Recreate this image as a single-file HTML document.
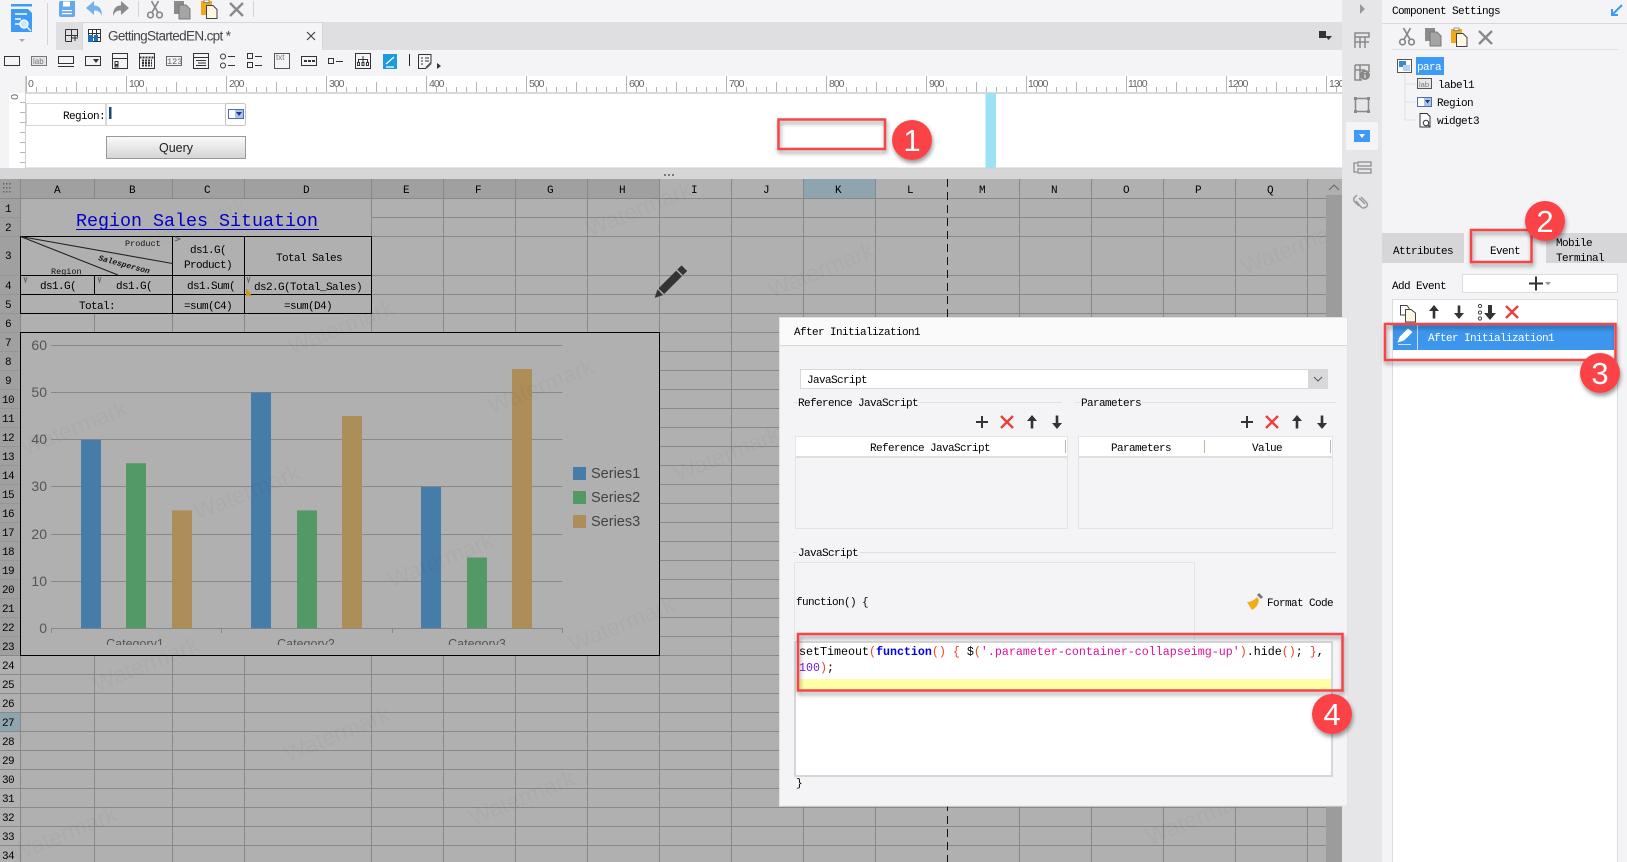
<!DOCTYPE html>
<html><head><meta charset="utf-8"><title>GettingStartedEN.cpt</title>
<style>
html,body{margin:0;padding:0;width:1627px;height:862px;overflow:hidden;background:#f4f4f6}
svg{display:block}
text{white-space:pre}
.s{font-family:"Liberation Mono",monospace;font-size:11px;letter-spacing:-.6px;fill:#000}
.w{font-family:"Liberation Sans",sans-serif;font-size:23px;fill:#000;opacity:.03}
.r{font-family:"Liberation Sans",sans-serif;font-size:10.5px;letter-spacing:-1px;fill:#666}
.c{font-family:"Liberation Sans",sans-serif;font-size:14px;fill:#555}
.n{font-family:"Liberation Sans",sans-serif;font-size:31px;fill:#fff;text-anchor:middle}
.code{font-family:"Liberation Mono",monospace;font-size:11.67px;fill:#000}
</style></head><body>
<svg width="1627" height="862" viewBox="0 0 1627 862" xmlns="http://www.w3.org/2000/svg">
<defs>
<filter id="sh" x="-20%" y="-30%" width="140%" height="170%"><feDropShadow dx="1" dy="3" stdDeviation="2" flood-color="#000" flood-opacity=".4"/></filter>
<pattern id="rt" x="26" y="76" width="100" height="17" patternUnits="userSpaceOnUse">
<path d="M.5 0V17M50.5 6V17M10.5 11V17M20.5 11V17M30.5 11V17M40.5 11V17M60.5 11V17M70.5 11V17M80.5 11V17M90.5 11V17" stroke="#b5b5b5" fill="none"/></pattern>
<pattern id="rl" x="9" y="93" width="17" height="10" patternUnits="userSpaceOnUse"><path d="M11 9.5H17" stroke="#b5b5b5"/></pattern>
<g id="cut" fill="none" stroke="#888" stroke-width="1.7"><circle cx="3.5" cy="14" r="2.8"/><circle cx="12.5" cy="14" r="2.8"/><path d="M5 11.5 11.5 0M11 11.5 4.500 0"/></g>
<g id="copy"><rect x="0" y="0" width="10" height="13" fill="#8b8b8b"/><path d="M5 4h7l4 4v10H5z" fill="#a5a5a5" stroke="#777"/></g>
<g id="paste"><rect x="0" y="1" width="11" height="14" fill="#f0a81c"/><rect x="3" y="0" width="5" height="2.500" fill="#fff" stroke="#555" stroke-width=".6"/><path d="M5.500 5.500h6.500l4 4v9H5.500z" fill="#fff6e4" stroke="#444"/></g>
<path id="del" d="M1 1 14 14M14 1 1 14" stroke="#888" stroke-width="2.300" fill="none"/>
<path id="plus" d="M-6 0H6M0 -6V6" stroke="#333" stroke-width="2"/>
<path id="x" d="M-6 -6 6 6M6 -6 -6 6" stroke="#ea4040" stroke-width="2.400"/>
<path id="up" d="M0 -7 -5 -1H-1.300V6.500H1.300V-1H5Z" fill="#333"/>
<path id="dn" d="M0 7 -5 1H-1.300V-6.500H1.300V1H5Z" fill="#333"/>
<clipPath id="cat"><rect x="21" y="630" width="638" height="15"/></clipPath>
</defs>

<!-- top toolbar background -->
<rect width="1342" height="76" fill="#f4f4f6"/>
<rect x="56" y="22" width="1286" height="28" fill="#dfdfe1"/>
<rect x="82" y="22" width="240" height="28" fill="#f4f4f6"/>
<path d="M82.500 50V22.500H322.500V50" fill="none" stroke="#d6d6d8"/>
<!-- logo -->
<rect x="11" y="4" width="21" height="2.500" fill="#3d9bf5"/>
<path d="M11 9H28L32 13V32H11Z" fill="#3d9bf5"/>
<path d="M15 14H27M15 19H21M15 24H20" stroke="#fff" stroke-width="1.500"/>
<circle cx="24" cy="24" r="4" fill="#cfe4fa" stroke="#fff" stroke-width="1.300"/>
<path d="M27 27 31 31" stroke="#eee" stroke-width="1.500"/>
<path d="M19 39H25L22 42Z" fill="#aaa"/>
<path d="M47.500 3V45M138.500 1V17M253.500 1V17" stroke="#d4d4d6"/>
<!-- save undo redo -->
<path d="M59 3Q59 1 61 1H75V15Q75 17 73 17H61Q59 17 59 15Z" fill="#64a9ec"/>
<rect x="63" y="1.500" width="7" height="5" fill="#fff"/><rect x="62" y="10" width="10" height="1.200" fill="#fff"/><rect x="62" y="13" width="10" height="1.200" fill="#fff"/>
<path d="M86 8 94 1V5.500C100 5.500 102 10 102 16C100 11.500 98 10.500 94 10.500V15Z" fill="#74b2ea"/>
<path d="M129 8 121 1V5.500C115 5.500 113 10 113 16C115 11.500 117 10.500 121 10.500V15Z" fill="#8a8a8a"/>
<use href="#cut" x="147" y="1"/><use href="#copy" x="174" y="1"/><use href="#paste" x="201" y="0"/><use href="#del" x="229" y="2"/>
<!-- tab -->
<path d="M65.500 29.500H78M65.500 35.500H78M65.500 41.500H72M65.500 29.500V41.500M71.500 29.500V41.500M77.500 29.500V37M72 38H78M75 35V41" stroke="#333" fill="none"/>
<rect x="88.500" y="29.500" width="12" height="12" fill="#fff" stroke="#333"/><path d="M88.500 33.500H100.500M92.500 29.500V41.500M96.500 29.500V41.500M88.500 37.500H100.500" stroke="#333"/>
<rect x="88" y="35" width="5" height="7" fill="#1b72b8"/><rect x="94" y="35" width="4" height="6" fill="#1b72b8"/>
<text x="108" y="40.500" font-family="'Liberation Sans',sans-serif" font-size="13.500" fill="#444" textLength="123">GettingStartedEN.cpt *</text>
<path d="M307 32 315 40M315 32 307 40" stroke="#444" stroke-width="1.200"/>
<path d="M1319 31H1326V38H1319Z" fill="#333"/><path d="M1325 36H1332L1328.500 40Z" fill="#333"/>
<!-- widget toolbar -->
<g fill="none" stroke="#333">
<rect x="4.500" y="56.500" width="15" height="9"/>
<rect x="31.500" y="56.500" width="15" height="9" fill="#e6e6e6" stroke="#777"/>
<rect x="58.500" y="56.500" width="15" height="7"/><path d="M58 66.500H74"/>
<rect x="85.500" y="56.500" width="15" height="9"/>
<rect x="112.500" y="53.500" width="15" height="15"/><path d="M112.500 58.500H127.500M115 61.500H118V64.500H115ZM115 65.500H118V67H115Z"/>
<rect x="139.500" y="53.500" width="15" height="15"/><path d="M139.500 57.500H154.500M142 60.500H152M142 63H152M142 65.500H152" stroke-dasharray="2 1" stroke-width="2"/>
<rect x="166.500" y="56.500" width="15" height="9" stroke="#666"/>
<rect x="193.500" y="53.500" width="15" height="15"/><path d="M193.500 57.500H208.500M196 60.500H206M198 63H206M196 65.500H206"/>
<circle cx="223" cy="56.500" r="2.500"/><circle cx="223" cy="65.500" r="2.500"/><path d="M228 56.500H235M228 65.500H235"/>
<rect x="247.500" y="53.500" width="5" height="5"/><rect x="247.500" y="62.500" width="5" height="5"/><path d="M255 56.500H262M255 65.500H262"/>
<rect x="274.500" y="53.500" width="15" height="15" stroke="#555"/>
<rect x="301.500" y="56.500" width="15" height="9"/>
<rect x="328.500" y="58.500" width="5" height="5"/><path d="M336 61.500H343"/>
<rect x="355.500" y="53.500" width="15" height="15"/><path d="M363 56V59.500M358.500 62V59.500H367.500V62M363 59.500V62"/><path d="M357.500 62.500h2v3h-2zM362 62.500h2v3h-2zM366.500 62.500h2v3h-2z"/>
<path d="M409.500 54V66" stroke="#222"/>
<path d="M418.500 54.500H431V63M418.500 54.500V68.500H426"/><path d="M421 58H423M425 58H429M421 61H423M425 61H429M421 64H423"/>
</g>
<path d="M93 59H99L96 63Z M304 60h3v2h-3zM308 60h3v2h-3zM312 60h3v2h-3z" fill="#333"/>
<rect x="383" y="54" width="14" height="15" fill="#1b9ade"/><path d="M386 64 394 57M386 67H394" stroke="#fff" stroke-width="1.200"/>
<path d="M437 63V69L441 66Z" fill="#333"/>
<path d="M426 68 431 63" stroke="#555" stroke-width="2"/>
<text x="33" y="64" font-family="'Liberation Sans',sans-serif" font-size="8" fill="#777">lab</text>
<text x="167" y="64" font-family="'Liberation Mono',monospace" font-size="8.500" fill="#666">123</text>
<text x="276" y="60" font-family="'Liberation Sans',sans-serif" font-size="8" fill="#777">txt</text>

<!-- ruler -->
<rect x="0" y="76" width="1342" height="17" fill="#f4f4f6"/>
<rect x="26" y="76" width="1316" height="17" fill="#fff"/>
<rect x="26" y="76" width="1316" height="17" fill="url(#rt)"/>
<rect x="9" y="93" width="17" height="75" fill="#fff"/><rect x="9" y="93" width="17" height="75" fill="url(#rl)"/>
<rect x="25" y="76" width="1" height="92" fill="#ccc"/>
<rect x="26" y="92" width="1316" height="2" fill="#d8d8da"/>
<g class="r"><text x="28" y="87">0</text><text x="129" y="87">100</text><text x="229" y="87">200</text><text x="329" y="87">300</text><text x="429" y="87">400</text><text x="529" y="87">500</text><text x="629" y="87">600</text><text x="729" y="87">700</text><text x="829" y="87">800</text><text x="929" y="87">900</text><text x="1028" y="87">1000</text><text x="1128" y="87">1100</text><text x="1228" y="87">1200</text><text x="1329" y="87">130</text></g>
<text class="r" transform="translate(11 94) rotate(90)" x="0" y="0">0</text>
<!-- form -->
<rect x="26" y="94" width="1316" height="74" fill="#fff"/>
<rect x="985.500" y="93" width="10.500" height="75" fill="#9be3f4"/>
<rect x="26.500" y="103.500" width="79" height="22" fill="#fff" stroke="#d8d8d8"/>
<text class="s" x="63" y="119">Region:</text>
<rect x="106.500" y="103.500" width="119" height="22" fill="#fff" stroke="#d8d8d8"/>
<rect x="109" y="107" width="2.500" height="12" fill="#1a4a7a"/>
<rect x="225.500" y="103.500" width="20" height="22" rx="2" fill="#fff" stroke="#c4c4c4"/>
<rect x="228.500" y="109.500" width="15" height="9" fill="#fff" stroke="#4f6fa8"/><rect x="235" y="110" width="8" height="8" fill="#a9c4e8"/><path d="M236 112H242L239 116Z" fill="#1f3a80"/>
<defs><linearGradient id="b" x1="0" y1="0" x2="0" y2="1"><stop offset="0" stop-color="#fbfbfb"/><stop offset="1" stop-color="#d4d4d4"/></linearGradient></defs>
<rect x="106.500" y="136.500" width="139" height="22" fill="url(#b)" stroke="#999"/>
<text x="176" y="152" text-anchor="middle" font-family="'Liberation Sans',sans-serif" font-size="12.500" fill="#222">Query</text>
<!-- split strip -->
<rect y="168" width="1342" height="11" fill="#d6d6d9"/><rect x="26" y="167.500" width="1316" height="1" fill="#cfcfd1"/>
<path d="M664 174h2v2h-2zM668 174h2v2h-2zM672 174h2v2h-2z" fill="#777"/>

<!-- sheet -->
<rect y="179" width="1326" height="683" fill="#b0b0b0"/>
<rect y="179" width="659.500" height="19" fill="#a0a0a0"/>
<rect x="803.500" y="179" width="72" height="19" fill="#8ea4ae"/>
<rect y="179" width="20.500" height="476" fill="#a0a0a0"/>
<rect y="712.500" width="20.500" height="18.500" fill="#8ea4ae"/>
<path d="M3 183h1.500v1.500H3zM6 183h1.500v1.500H6zM9 183h1.500v1.500H9zM3 187h1.500v1.500H3zM6 187h1.500v1.500H6zM9 187h1.500v1.500H9zM3 191h1.500v1.500H3zM6 191h1.500v1.500H6zM9 191h1.500v1.500H9z" fill="#666"/>
<g stroke="#888" shape-rendering="crispEdges" fill="none">
<path d="M20.500 179V862M94.500 179V862M172.500 179V862M244.500 179V862M371.500 179V862M443.500 179V862M515.500 179V862M587.500 179V862M659.500 179V862M731.500 179V862M803.500 179V862M875.500 179V862M1019.500 179V862M1091.500 179V862M1163.500 179V862M1235.500 179V862M1307.500 179V862"/>
<path d="M0 198.500H1326M0 217.500H1326M0 236.500H1326M0 275.500H1326M0 294.500H1326M0 313.500H1326M0 332.500H1326M0 351.500H1326M0 370.500H1326M0 389.500H1326M0 408.500H1326M0 427.500H1326M0 446.500H1326M0 465.500H1326M0 484.500H1326M0 503.500H1326M0 522.500H1326M0 541.500H1326M0 560.500H1326M0 579.500H1326M0 598.500H1326M0 617.500H1326M0 636.500H1326M0 655.500H1326M0 674.500H1326M0 693.500H1326M0 712.500H1326M0 731.500H1326M0 750.500H1326M0 769.500H1326M0 788.500H1326M0 807.500H1326M0 826.500H1326M0 845.500H1326"/>
</g>
<path d="M947.500 179V862" stroke="#111" stroke-width="1" stroke-dasharray="8 5"/>
<!-- row header line softening -->
<g stroke="#969696" shape-rendering="crispEdges"><path d="M0 217.500H20M0 236.500H20M0 275.500H20M0 294.500H20M0 313.500H20M0 332.500H20M0 351.500H20M0 370.500H20M0 389.500H20M0 408.500H20M0 427.500H20M0 446.500H20M0 465.500H20M0 484.500H20M0 503.500H20M0 522.500H20M0 541.500H20M0 560.500H20M0 579.500H20M0 598.500H20M0 617.500H20M0 636.500H20"/></g>
<rect x="21" y="199" width="350" height="37" fill="#b0b0b0"/>
<rect x="21" y="237" width="151" height="38" fill="#b0b0b0"/>
<rect x="21" y="295" width="151" height="18" fill="#b0b0b0"/>
<rect x="21" y="333" width="638" height="322" fill="#b0b0b0"/>
<g stroke="#000" fill="none" shape-rendering="crispEdges">
<path d="M20.500 236.500H371.500V313.500H20.500ZM20.500 275.500H371.500M20.500 294.500H371.500M172.500 236.500V313.500M244.500 236.500V313.500M94.500 275.500V294.500"/>
<rect x="20.500" y="332.500" width="639" height="323"/>
</g>
<path d="M20.500 236.500 172.500 263.500M20.500 236.500 118 275" stroke="#222" stroke-width="1.100"/>
<path d="M246 288 252 296H246Z" fill="#c99a1a"/>
<path d="M175 237 180 239 175 241M24 277 25.500 282 27 277M98 277 99.500 282 101 277M247 277 248.500 282 250 277" stroke="#666" fill="none" stroke-width="1"/>

<!-- column/row labels -->
<g class="s" text-anchor="middle">
<text x="57" y="193">A</text><text x="132" y="193">B</text><text x="207" y="193">C</text><text x="306" y="193">D</text><text x="406" y="193">E</text><text x="478" y="193">F</text><text x="550" y="193">G</text><text x="622" y="193">H</text><text x="694" y="193">I</text><text x="766" y="193">J</text><text x="838" y="193">K</text><text x="910" y="193">L</text><text x="982" y="193">M</text><text x="1054" y="193">N</text><text x="1126" y="193">O</text><text x="1198" y="193">P</text><text x="1270" y="193">Q</text>
<text x="8" y="212">1</text><text x="8" y="231">2</text><text x="8" y="259">3</text><text x="8" y="289">4</text><text x="8" y="308">5</text><text x="8" y="327">6</text><text x="8" y="346">7</text><text x="8" y="365">8</text><text x="8" y="384">9</text><text x="8" y="403">10</text><text x="8" y="422">11</text><text x="8" y="441">12</text><text x="8" y="460">13</text><text x="8" y="479">14</text><text x="8" y="498">15</text><text x="8" y="517">16</text><text x="8" y="536">17</text><text x="8" y="555">18</text><text x="8" y="574">19</text><text x="8" y="593">20</text><text x="8" y="612">21</text><text x="8" y="631">22</text><text x="8" y="650">23</text><text x="8" y="669">24</text><text x="8" y="688">25</text><text x="8" y="707">26</text><text x="8" y="726">27</text><text x="8" y="745">28</text><text x="8" y="764">29</text><text x="8" y="783">30</text><text x="8" y="802">31</text><text x="8" y="821">32</text><text x="8" y="840">33</text><text x="8" y="859">34</text>
<text x="58" y="289">ds1.G(</text><text x="134" y="289">ds1.G(</text><text x="211" y="289">ds1.Sum(</text><text x="308" y="290">ds2.G(Total_Sales)</text>
<text x="208" y="253">ds1.G(</text><text x="208" y="268">Product)</text><text x="309" y="261">Total Sales</text>
<text x="97" y="309">Total:</text><text x="208" y="309">=sum(C4)</text><text x="308" y="309">=sum(D4)</text>
</g>
<text x="76" y="226" font-family="'Liberation Mono',monospace" font-size="18.340" fill="#0000c8">Region Sales Situation</text>
<rect x="76" y="229" width="243" height="1" fill="#0000c8"/>
<g font-family="'Liberation Mono',monospace" font-size="8.500" fill="#111">
<text x="125" y="246">Product</text><text x="51" y="274">Region</text>
<text transform="translate(98 260) rotate(15)" font-weight="bold" font-style="italic" font-size="8">Salesperson</text></g>

<!-- chart -->
<g stroke="#888" shape-rendering="crispEdges" fill="none"><path d="M51 345.500H562.500M51 392.500H562.500M51 439.500H562.500M51 486.500H562.500M51 534.500H562.500M51 581.500H562.500M51 628.500H562.500M51.500 628V633M221.500 628V633M392.500 628V633M562.500 628V633"/></g>
<g fill="#467ca8"><rect x="81" y="439.700" width="20" height="188.600"/><rect x="251" y="392.500" width="20" height="235.800"/><rect x="421" y="486.800" width="20" height="141.500"/><rect x="573" y="467" width="13" height="13"/></g>
<g fill="#529966"><rect x="126" y="463.200" width="20" height="165.100"/><rect x="297" y="510.400" width="20" height="117.900"/><rect x="467" y="557.500" width="20" height="70.800"/><rect x="573" y="491" width="13" height="13"/></g>
<g fill="#ad8d58"><rect x="172" y="510.400" width="20" height="117.900"/><rect x="342" y="416" width="20" height="212.300"/><rect x="512" y="369" width="20" height="259.300"/><rect x="573" y="515" width="13" height="13"/></g>
<g class="c" text-anchor="end"><text x="47" y="350">60</text><text x="47" y="397">50</text><text x="47" y="444">40</text><text x="47" y="491">30</text><text x="47" y="539">20</text><text x="47" y="586">10</text><text x="47" y="633">0</text></g>
<g clip-path="url(#cat)"><g class="c" text-anchor="middle" style="font-size:12.500px"><text x="135" y="648">Category1</text><text x="306" y="648">Category2</text><text x="477" y="648">Category3</text></g></g>
<g class="c" style="font-size:14.500px;fill:#444"><text x="591" y="478">Series1</text><text x="591" y="502">Series2</text><text x="591" y="526">Series3</text></g>

<!-- watermarks -->
<g class="w">
<text transform="translate(590 237) rotate(-22)">Watermark</text>
<text transform="translate(1245 275) rotate(-22)">Watermark</text>
<text transform="translate(772 298) rotate(-22)">Watermark</text>
<text transform="translate(292 355) rotate(-22)">Watermark</text>
<text transform="translate(145 253) rotate(-22)" opacity=".6">Watermark</text>
<text transform="translate(25 456) rotate(-22)">Watermark</text>
<text transform="translate(492 414) rotate(-22)">Watermark</text>
<text transform="translate(678 482) rotate(-22)">Watermark</text>
<text transform="translate(198 520) rotate(-22)">Watermark</text>
<text transform="translate(392 588) rotate(-22)">Watermark</text>
<text transform="translate(573 652) rotate(-22)">Watermark</text>
<text transform="translate(97 692) rotate(-22)">Watermark</text>
<text transform="translate(288 762) rotate(-22)">Watermark</text>
<text transform="translate(473 826) rotate(-22)">Watermark</text>
<text transform="translate(15 862) rotate(-22)">Watermark</text>
<text transform="translate(1150 845) rotate(-22)">Watermark</text>
</g>
<!-- scrollbar -->
<rect x="1326" y="179" width="16" height="683" fill="#9c9c9c"/>
<rect x="1326" y="179" width="16" height="16" fill="#b0b0b0"/>
<path d="M1329 190 1334 185 1339 190" fill="none" stroke="#666"/>
<!-- pencil -->
<g transform="translate(669.500 283) rotate(45)" fill="#333"><rect x="-4" y="-21" width="8" height="6"/><rect x="-4" y="-13.500" width="8" height="25"/><path d="M-4 13H4L0 21Z"/></g>

<!-- sidebar -->
<rect x="1342" width="40" height="862" fill="#e6e6e8"/>
<path d="M1360 4V14L1365 9Z" fill="#999"/>
<g fill="none" stroke="#888" stroke-width="1.500">
<path d="M1355 33H1369V37H1355ZM1355 33V48M1360 37V48M1365 37V48M1355 42H1369"/>
<path d="M1355 65H1369V72M1355 65V80H1362M1355 70H1365M1360 65V80"/>
<rect x="1355.500" y="98.500" width="13" height="13"/>
</g>
<circle cx="1365" cy="75" r="5" fill="#888"/><path d="M1365 72V73M1365 74.500V78" stroke="#eee" stroke-width="1.200"/>
<path d="M1354 97h3v3h-3zM1367 97h3v3h-3zM1354 110h3v3h-3zM1367 110h3v3h-3z" fill="#888"/>
<rect x="1346" y="122" width="32" height="28" fill="#f4f4f6"/>
<rect x="1354" y="130" width="16" height="12" fill="#3d9bf5"/><path d="M1359 134H1365L1362 138Z" fill="#fff"/>
<g fill="none" stroke="#999" stroke-width="1.500"><path d="M1358 162H1371V166H1358ZM1358 169H1371V173H1358ZM1357 163H1354V172H1357"/>
<path d="M1357 195 1354 198Q1353 201 1356 203L1359 206M1361 197 1366 202Q1369 205 1366 207Q1363 209 1361 207L1356 201M1365 204 1359 198"/></g>

<!-- dialog -->
<rect x="779.500" y="317.500" width="568" height="488.500" fill="#f4f4f6" stroke="#e2e2e4"/>
<rect x="780" y="318" width="567" height="27" fill="#fafafa"/><rect x="780" y="345" width="567" height="1" fill="#d8d8da"/>
<text class="s" x="794" y="335">After Initialization1</text>
<rect x="800.500" y="369.500" width="527" height="19" fill="#fff" stroke="#d8d8da"/>
<rect x="1308" y="370" width="19.500" height="18" fill="#d8d8da"/>
<path d="M1314 377 1318 381 1322 377" fill="none" stroke="#555"/>
<text class="s" x="807" y="383">JavaScript</text>
<g stroke="#e0e0e2" shape-rendering="crispEdges"><path d="M793 402.500H797M919 402.500H1062M1075 402.500H1080M1142 402.500H1336M793 552.500H797M860 552.500H1336"/></g>
<text class="s" x="798" y="406">Reference JavaScript</text><text class="s" x="1081" y="406">Parameters</text><text class="s" x="798" y="556">JavaScript</text>
<use href="#plus" x="982" y="422"/><use href="#x" x="1007" y="422"/><use href="#up" x="1032" y="422"/><use href="#dn" x="1057" y="422"/>
<use href="#plus" x="1247" y="422"/><use href="#x" x="1272" y="422"/><use href="#up" x="1297" y="422"/><use href="#dn" x="1322" y="422"/>
<rect x="795.500" y="436.500" width="272" height="92" fill="#f4f4f6" stroke="#e4e4e6"/>
<rect x="796" y="437" width="271" height="19" fill="#fff"/><rect x="796" y="456" width="271" height="2" fill="#dedee0"/>
<rect x="1078.500" y="436.500" width="254" height="92" fill="#f4f4f6" stroke="#e4e4e6"/>
<rect x="1079" y="437" width="253" height="19" fill="#fff"/><rect x="1079" y="456" width="253" height="2" fill="#dedee0"/>
<path d="M1065.500 440V453M1204.500 440V453M1330.500 440V453" stroke="#bbb6aa"/>
<g class="s" text-anchor="middle"><text x="930" y="451">Reference JavaScript</text><text x="1141" y="451">Parameters</text><text x="1267" y="451">Value</text></g>
<path d="M794.500 640V562.500H1194.500V640" fill="none" stroke="#e4e4e6"/>
<text class="s" x="796" y="605">function() {</text>
<path d="M1258 594 1262 598" stroke="#777" stroke-width="3"/>
<path d="M1247 602Q1253 602 1257 597L1259 600Q1258 607 1252 610Q1250 607 1247 602Z" fill="#f2ac18"/>
<text class="s" x="1267" y="606">Format Code</text>
<rect x="795" y="642" width="537" height="134" fill="#fff" stroke="#d6d6d8" stroke-width="2"/>
<rect x="796" y="679" width="535" height="11.500" fill="#ffffa8"/>
<text class="code" x="799" y="655">setTimeout<tspan fill="#e8442a">(</tspan><tspan fill="#0000f0" style="font-weight:600">function</tspan><tspan fill="#e8442a">()</tspan> <tspan fill="#e8442a">{</tspan> $<tspan fill="#e8442a">(</tspan><tspan fill="#e0109a">'.parameter-container-collapseimg-up'</tspan><tspan fill="#e8442a">)</tspan>.hide<tspan fill="#e8442a">()</tspan>; <tspan fill="#e8442a">}</tspan>,</text>
<text class="code" x="799" y="671"><tspan fill="#7020e0">100</tspan><tspan fill="#e8442a">)</tspan>;</text>
<text class="s" x="796" y="786">}</text>

<!-- right panel -->
<rect x="1382" width="245" height="862" fill="#f4f4f6"/>
<text class="s" x="1392" y="14">Component Settings</text>
<path d="M1612 15 1622 5M1612 9V15H1618" fill="none" stroke="#3d9bf5" stroke-width="2"/>
<rect x="1382" y="23" width="245" height="1" fill="#d8d8da"/>
<use href="#cut" x="1399" y="28"/><use href="#copy" x="1425" y="28"/><use href="#paste" x="1451" y="28"/><use href="#del" x="1478" y="30"/>
<rect x="1392" y="49" width="226" height="1" fill="#e0e0e2"/>
<rect x="1397.500" y="59.500" width="14" height="13" fill="#fff" stroke="#555"/><rect x="1399" y="61" width="7" height="6" fill="#3b8cc4"/><rect x="1403" y="65" width="7" height="6" fill="#b6d2f0"/>
<rect x="1416" y="57" width="28" height="18" fill="#3d9bf5"/>
<text class="s" x="1417" y="70" style="fill:#fff">para</text>
<path d="M1405 74V120M1405 84H1416M1405 102H1416M1405 120H1416" stroke="#e0e0e2" fill="none"/>
<rect x="1417.500" y="78.500" width="14" height="10" fill="#e6e6e6" stroke="#555"/>
<text x="1419" y="87" font-family="'Liberation Sans',sans-serif" font-size="7.500" fill="#777">lab</text>
<text class="s" x="1438" y="88">label1</text>
<rect x="1417.500" y="97.500" width="14" height="9" fill="#fff" stroke="#4f6fa8"/><rect x="1424" y="98" width="7" height="8" fill="#a9c4e8"/><path d="M1425 100H1430L1427.500 103.500Z" fill="#1f3a80"/>
<text class="s" x="1437" y="106">Region</text>
<path d="M1420 113.500H1427L1430 116.500V127H1420Z" fill="#fff" stroke="#333"/><circle cx="1426" cy="123" r="2.700" fill="#fff" stroke="#333"/><path d="M1428 125 1430 127" stroke="#333"/>
<text class="s" x="1437" y="124">widget3</text>
<!-- tabs -->
<rect x="1382" y="233" width="82" height="30" fill="#d6d6d9"/><rect x="1546" y="233" width="81" height="30" fill="#d6d6d9"/>
<text class="s" x="1393" y="254">Attributes</text><text class="s" x="1490" y="254">Event</text><text class="s" x="1556" y="246">Mobile</text><text class="s" x="1556" y="261">Terminal</text>
<text class="s" x="1392" y="289">Add Event</text>
<rect x="1462.500" y="274.500" width="155" height="18" fill="#fff" stroke="#dcdcde"/>
<path d="M1529 283.500H1543M1536 276.500V290.500" stroke="#333" stroke-width="2"/><path d="M1545 282H1551L1548 285.500Z" fill="#999"/>
<rect x="1392.500" y="299.500" width="225" height="563" fill="#fff" stroke="#dcdcde"/>
<path d="M1400.500 305.500H1407L1409 308V315H1400.500Z" fill="#fff" stroke="#444"/><path d="M1405.500 309.500H1411L1415.500 313V322H1405.500Z" fill="#fff6e4" stroke="#444"/>
<use href="#up" x="1434" y="312"/><use href="#dn" x="1459" y="312"/>
<g fill="none" stroke="#444"><circle cx="1480" cy="306" r="1.600"/><circle cx="1480" cy="312.500" r="1.600"/><circle cx="1480" cy="318.500" r="1.600"/></g>
<path d="M1488 305H1492V313H1496L1490 320 1484 313H1488Z" fill="#333"/>
<use href="#x" x="1512" y="312"/>
<rect x="1393" y="325" width="221" height="25" fill="#3d96ee"/>
<rect x="1417" y="325" width="1" height="25" fill="#cfe3f8"/>
<path d="M1398 342 1400 337 1408 329 1412 332 1404 340ZM1398 344.500H1411" fill="#fff" stroke="#fff" stroke-width=".8"/>
<text class="s" x="1428" y="341" style="fill:#fff">After Initialization1</text>

<!-- callouts -->
<g fill="none" stroke="#f44548" stroke-width="2.500" filter="url(#sh)">
<rect x="778.500" y="119.500" width="106.500" height="29.500"/>
<rect x="1471" y="230" width="60.500" height="32"/>
<rect x="1385" y="324" width="230.500" height="36"/>
<rect x="798" y="634" width="544.500" height="56.500"/>
</g>
<g fill="#fb4246" filter="url(#sh)">
<circle cx="912" cy="140" r="20"/><circle cx="1545" cy="221" r="20"/><circle cx="1600" cy="373" r="20"/><circle cx="1332" cy="714" r="20"/>
</g>
<text class="n" x="912" y="151">1</text><text class="n" x="1545" y="232">2</text><text class="n" x="1600" y="384">3</text><text class="n" x="1332" y="725">4</text>
</svg>
</body></html>
